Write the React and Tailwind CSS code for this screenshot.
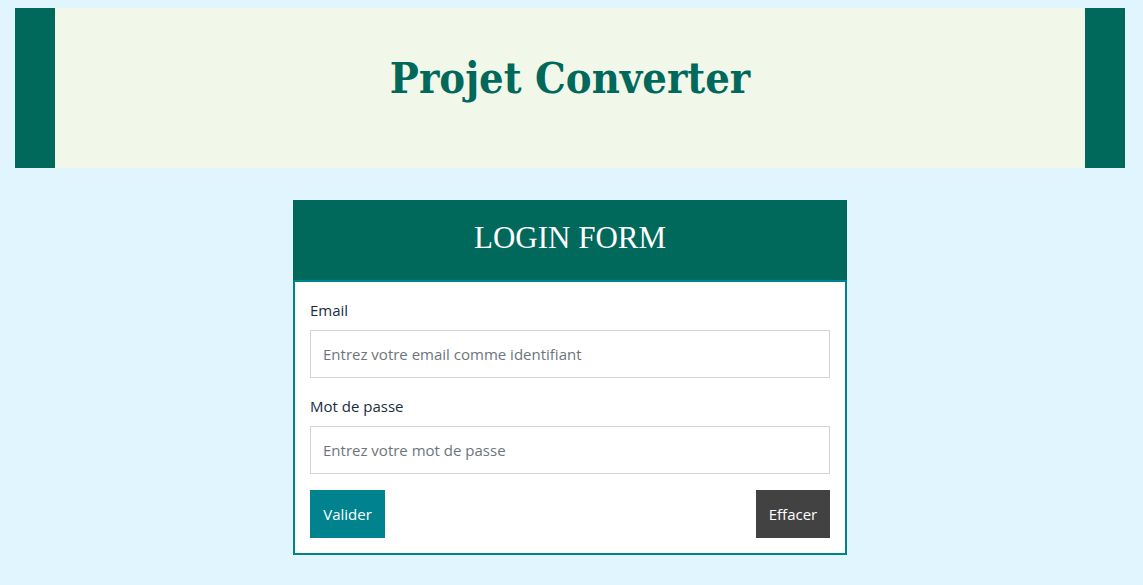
export default function App() {
  return (
    <div className="min-h-[585px] bg-[#e1f5fe] pt-2 pb-8" style={{ fontFamily: '"Open Sans", "Noto Sans", sans-serif' }}>
      <header className="ml-[15px] w-[1110px] h-[160px] bg-[#f1f8e9] border-x-[40px] border-[#00695c] flex items-center justify-center">
        <h1 className="text-[43px] font-bold text-[#00695c] -mt-[20px]" style={{ fontFamily: '"DejaVu Serif Condensed", "DejaVu Serif", serif', fontStretch: 'condensed' }}>
          Projet Converter
        </h1>
      </header>
      <div className="mt-8 w-[554px] ml-[293px]">
        <div className="h-[80px] bg-[#00695c] flex items-center justify-center">
          <h2 className="text-[31px] text-white -mt-[4px]" style={{ fontFamily: '"Liberation Serif", serif' }}>LOGIN FORM</h2>
        </div>
        <form className="bg-white border-2 border-[#00838f] px-[15px] pt-[16px] pb-[15px] flex flex-col">
          <label className="text-[15px] leading-[24px] text-[#1b2d3f]">Email</label>
          <input className="mt-2 h-[48px] border border-[#cfd4da] px-3 text-[15px] outline-none placeholder:text-[#6c757d]" placeholder="Entrez votre email comme identifiant" />
          <label className="mt-4 text-[15px] leading-[24px] text-[#1b2d3f]">Mot de passe</label>
          <input type="password" className="mt-2 h-[48px] border border-[#cfd4da] px-3 text-[15px] outline-none placeholder:text-[#6c757d]" placeholder="Entrez votre mot de passe" />
          <div className="mt-4 flex justify-between">
            <button type="button" className="h-[48px] w-[75px] bg-[#00838f] text-white text-[15px]">Valider</button>
            <button type="button" className="h-[48px] w-[74px] bg-[#424242] text-white text-[15px]">Effacer</button>
          </div>
        </form>
      </div>
    </div>
  );
}
